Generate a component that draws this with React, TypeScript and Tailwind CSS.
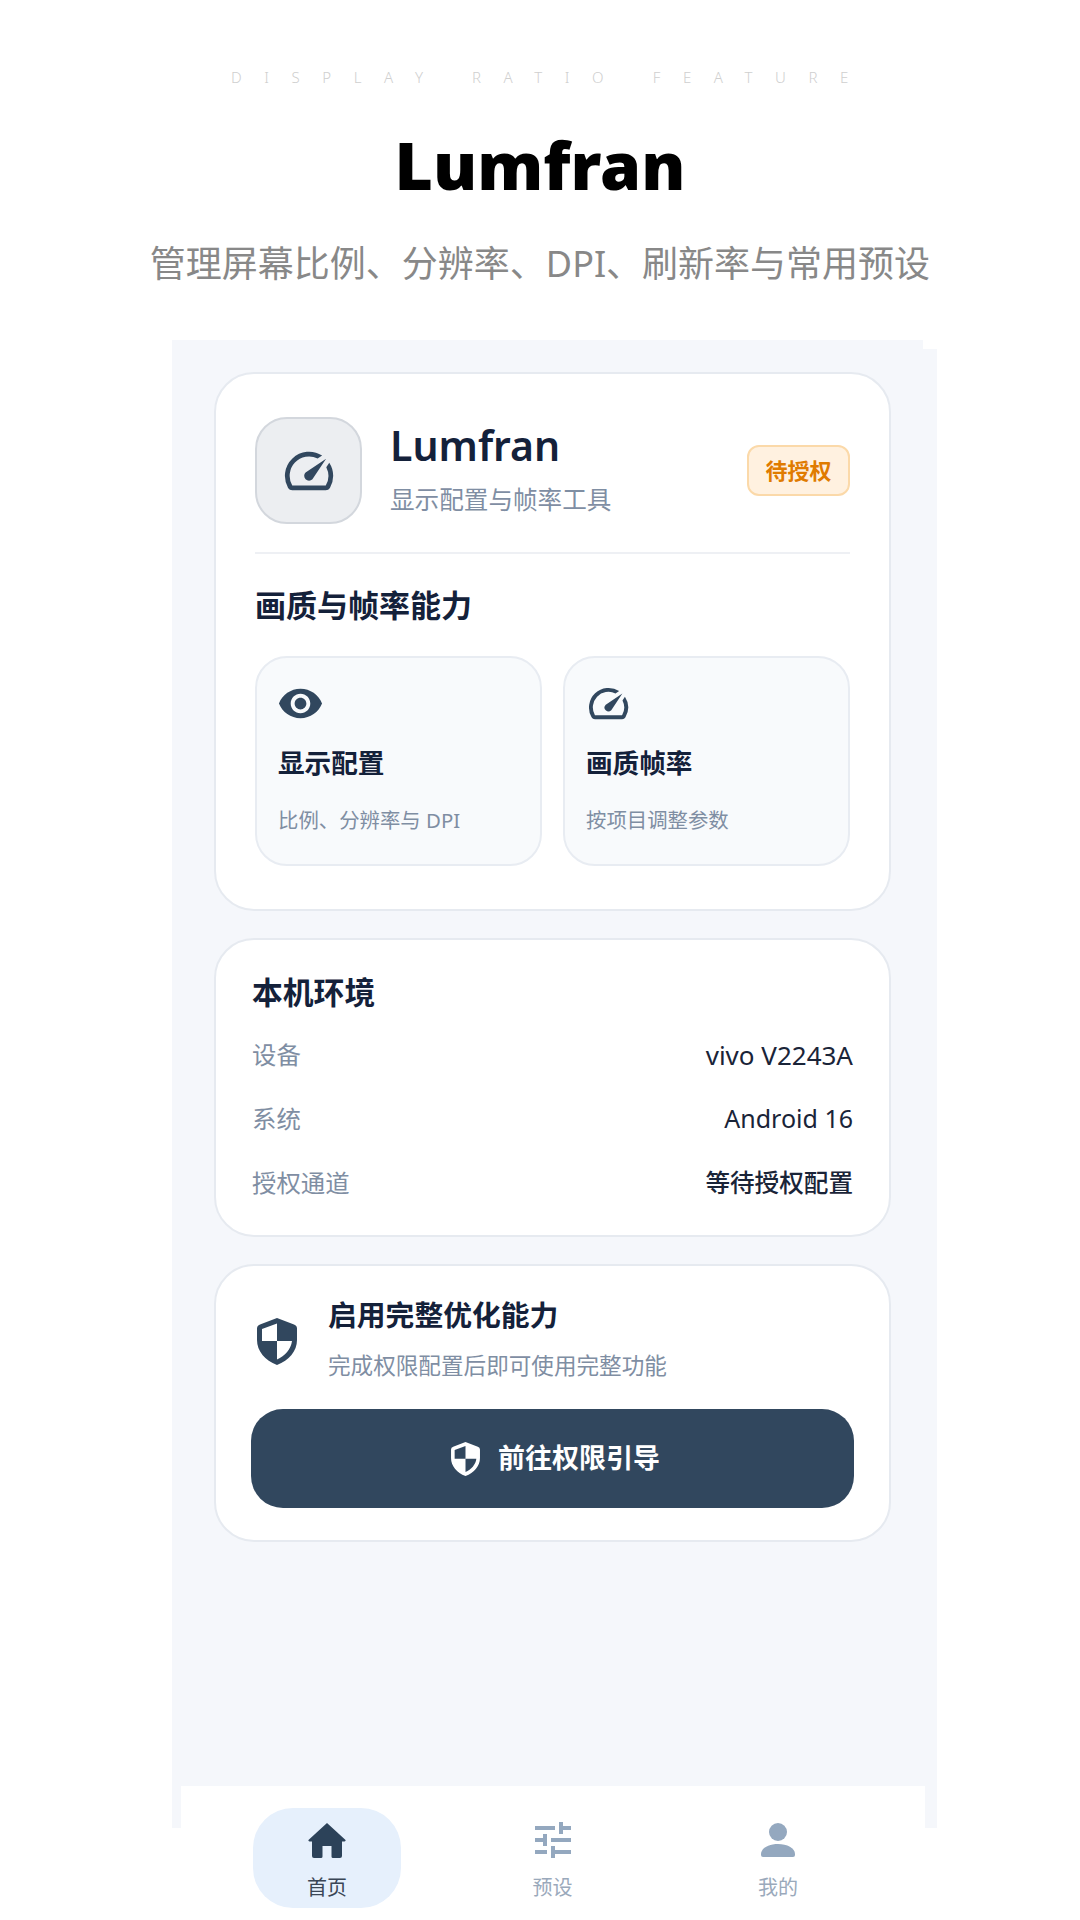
const font = { fontFamily: '"Noto Sans", "Noto Sans CJK SC", sans-serif' };

function SpeedIcon({ className }: { className: string }) {
  return (
    <svg viewBox="0 0 24 24" fill="currentColor" className={className}>
      <path d="M20.38 8.57l-1.23 1.85a8 8 0 0 1-.22 7.58H5.07A8 8 0 0 1 15.58 6.85l1.85-1.23A10 10 0 0 0 3.35 19a2 2 0 0 0 1.72 1h13.85a2 2 0 0 0 1.74-1 10 10 0 0 0-.27-10.44zm-9.79 6.84a2 2 0 0 0 2.83 0l5.66-8.49-8.49 5.66a2 2 0 0 0 0 2.83z" />
    </svg>
  );
}

function EyeIcon({ className }: { className: string }) {
  return (
    <svg viewBox="0 0 24 24" fill="currentColor" className={className}>
      <path d="M12 4.5C7 4.5 2.73 7.61 1 12c1.73 4.39 6 7.5 11 7.5s9.27-3.11 11-7.5c-1.73-4.39-6-7.5-11-7.5zM12 17c-2.76 0-5-2.24-5-5s2.24-5 5-5 5 2.24 5 5-2.24 5-5 5zm0-8c-1.66 0-3 1.34-3 3s1.34 3 3 3 3-1.34 3-3-1.34-3-3-3z" />
    </svg>
  );
}

function ShieldIcon({ className }: { className: string }) {
  return (
    <svg viewBox="0 0 40 47" fill="currentColor" className={className}>
      <path
        fillRule="evenodd"
        d="M20 0L37 6.5Q40 7.6 40 10.5V22C40 33 32 42.5 20 47C8 42.5 0 33 0 22V10.5Q0 7.6 3 6.5ZM20 5.5L5 11V23H20ZM20 23V41.5C28 38 34 31 35 23Z"
      />
    </svg>
  );
}

function HomeIcon({ className }: { className: string }) {
  return (
    <svg viewBox="0 0 38 35" fill="currentColor" className={className}>
      <path d="M19 0L37 16.5Q38.5 18 36.5 18.5H34V33Q34 35 32 35H25Q23.5 35 23.5 33.5V23H14.5V33.5Q14.5 35 13 35H6Q4 35 4 33V18.5H1.5Q-.5 18 1 16.5Z" />
    </svg>
  );
}

function TuneIcon({ className }: { className: string }) {
  return (
    <svg viewBox="0 0 24 24" fill="currentColor" className={className}>
      <path d="M3 17v2h6v-2H3zM3 5v2h10V5H3zm10 16v-2h8v-2h-8v-2h-2v6h2zM7 9v2H3v2h4v2h2V9H7zm14 4v-2H11v2h10zm-6-4h2V7h4V5h-4V3h-2v6z" />
    </svg>
  );
}

function PersonIcon({ className }: { className: string }) {
  return (
    <svg viewBox="0 0 34 34" fill="currentColor" className={className}>
      <circle cx="17" cy="9" r="9" />
      <path d="M0 31C0 25 8 21 17 21C26 21 34 25 34 31V32Q34 34 32 34H2Q0 34 0 32Z" />
    </svg>
  );
}

function Feature({ icon, title, desc }: { icon: React.ReactNode; title: string; desc: string }) {
  return (
    <div className="h-[210px] rounded-[32px] border-2 border-[#e8ecf2] bg-[#f8fafc] pl-[21px]">
      <div className="mt-[20px] flex h-[50px] items-center">{icon}</div>
      <div className="mt-[17px] text-[26.6px] leading-[36px] font-bold text-[#14213a]">{title}</div>
      <div className="mt-[25px] text-[20.4px] leading-[28px] text-[#7f8ea3]">{desc}</div>
    </div>
  );
}

function InfoRow({ label, value, valueClass }: { label: string; value: string; valueClass: string }) {
  return (
    <div className="flex h-[64px] items-center justify-between">
      <span className="text-[24.4px] text-[#7f8ea3]">{label}</span>
      <span className={valueClass}>{value}</span>
    </div>
  );
}

function NavItem({
  icon,
  label,
  active,
}: {
  icon: React.ReactNode;
  label: string;
  active?: boolean;
}) {
  return (
    <div
      className={`flex h-[100px] w-[148px] flex-col items-center rounded-[40px] ${
        active ? "bg-[#e6f0fc]" : ""
      }`}
    >
      <div className="mt-[8px] flex h-[48px] items-center">{icon}</div>
      <span
        className={`mt-[10px] text-[20px] leading-[28px] ${
          active ? "text-[#3a4656]" : "text-[#9aa9bb]"
        }`}
      >
        {label}
      </span>
    </div>
  );
}

export default function App() {
  return (
    <div className="h-[1920px] w-[1080px] overflow-hidden bg-white" style={font}>
      <div className="pt-[66px] pl-[22px] text-center text-[15px] leading-[22px] font-light tracking-[22.6px] text-[#cfcfcf]">
        DISPLAY RATIO FEATURE
      </div>
      <h1 className="mt-[28px] text-center text-[66px] leading-[96px] font-black text-black">
        Lumfran
      </h1>
      <p className="mt-[27px] text-center text-[36px] leading-[50px] text-[#888888]">
        管理屏幕比例、分辨率、DPI、刷新率与常用预设
      </p>

      <div className="mt-[51px] ml-[172px] h-[9px] w-[751px] bg-[#f5f7fb]" />
      <div className="ml-[172px] h-[1479px] w-[765px] bg-[#f5f7fb] pt-[23px] pl-[42px]">
        <div className="flex w-[677px] flex-col gap-[27px]">
          <section className="h-[539px] rounded-[40px] border-2 border-[#e6eaf0] bg-white px-[39px] pt-[43px]">
            <div className="flex items-center">
              <div className="flex h-[107px] w-[107px] items-center justify-center rounded-[32px] border-2 border-[#d3d7dd] bg-[#eceef1]">
                <SpeedIcon className="h-[58px] w-[58px] text-[#31475e]" />
              </div>
              <div className="ml-[28px] flex-1">
                <div className="-mt-[6px] text-[41px] leading-[54px] font-semibold text-[#14213a]">Lumfran</div>
                <div className="mt-[11px] text-[24.6px] leading-[34px] text-[#7f8ea3]">显示配置与帧率工具</div>
              </div>
              <div className="flex h-[51px] w-[103px] items-center justify-center rounded-[12px] border-2 border-[#fbd9a9] bg-[#fff1e0] text-[22px] font-bold text-[#e07b00]">
                待授权
              </div>
            </div>
            <div className="mt-[28px] h-[2px] bg-[#eef0f4]" />
            <h2 className="mt-[30px] text-[31px] leading-[42px] font-bold text-[#14213a]">画质与帧率能力</h2>
            <div className="mt-[30px] grid grid-cols-2 gap-[21px]">
              <Feature
                icon={<EyeIcon className="-ml-[1px] h-[47px] w-[47px] text-[#31475e]" />}
                title="显示配置"
                desc="比例、分辨率与 DPI"
              />
              <Feature
                icon={<SpeedIcon className="-ml-[1px] h-[47px] w-[47px] text-[#31475e]" />}
                title="画质帧率"
                desc="按项目调整参数"
              />
            </div>
          </section>

          <section className="h-[299px] rounded-[40px] border-2 border-[#e6eaf0] bg-white px-[36px] pt-[31px]">
            <h2 className="mb-[10px] text-[30.8px] leading-[42px] font-bold text-[#14213a]">本机环境</h2>
            <InfoRow label="设备" value="vivo V2243A" valueClass="text-[26px] text-[#1a2438]" />
            <InfoRow label="系统" value="Android 16" valueClass="text-[25px] text-[#1a2438]" />
            <InfoRow label="授权通道" value="等待授权配置" valueClass="text-[24.6px] font-medium text-[#1a2438]" />
          </section>

          <section className="h-[278px] rounded-[40px] border-2 border-[#e6eaf0] bg-white px-[35px] pt-[29px]">
            <div className="flex items-center">
              <ShieldIcon className="mt-[5px] ml-[6px] h-[47px] w-[40px] text-[#31475e]" />
              <div className="ml-[31px]">
                <div className="text-[28.8px] leading-[40px] font-bold text-[#14213a]">启用完整优化能力</div>
                <div className="mt-[15px] text-[22.6px] leading-[32px] text-[#7f8ea3]">完成权限配置后即可使用完整功能</div>
              </div>
            </div>
            <button className="mt-[27px] flex h-[99px] w-[603px] items-center justify-center rounded-[32px] bg-[#31475e] pl-[6px] text-[27px] font-bold text-white">
              <ShieldIcon className="mr-[18px] h-[34px] w-[29px]" />
              前往权限引导
            </button>
          </section>
        </div>
      </div>

      <nav className="relative -mt-[42px] ml-[181px] flex h-[134px] w-[744px] items-start justify-between bg-white pt-[22px] pr-[73px] pl-[72px]">
        <NavItem icon={<HomeIcon className="h-[35px] w-[38px] text-[#2c4259]" />} label="首页" active />
        <NavItem icon={<TuneIcon className="h-[48px] w-[48px] text-[#94a8bf]" />} label="预设" />
        <NavItem icon={<PersonIcon className="h-[34px] w-[34px] text-[#94a8bf]" />} label="我的" />
      </nav>
    </div>
  );
}
